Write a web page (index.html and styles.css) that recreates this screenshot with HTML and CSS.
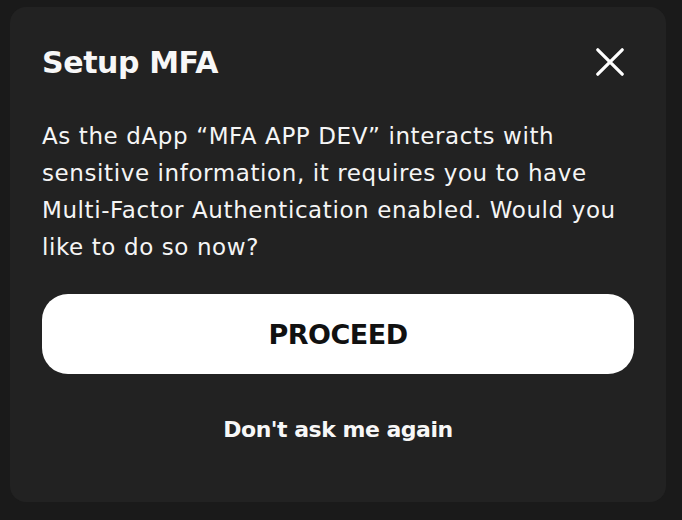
FILE: index.html
```html
<!DOCTYPE html>
<html>
<head>
<meta charset="utf-8">
<link rel="stylesheet" href="styles.css">
</head>
<body>
<div class="modal">
  <div class="header">
    <h1 class="title">Setup MFA</h1>
    <button class="close" aria-label="Close">
      <svg width="28" height="28" viewBox="0 0 28 28"><path d="M1.8 1.8 L26.2 26.2 M26.2 1.8 L1.8 26.2" stroke="#fff" stroke-width="3.2" stroke-linecap="round"/></svg>
    </button>
  </div>
  <p class="text">As the dApp “MFA APP DEV” interacts with<br>sensitive information, it requires you to have<br>Multi-Factor Authentication enabled. Would you<br>like to do so now?</p>
  <button class="proceed">PROCEED</button>
  <button class="skip">Don't ask me again</button>
</div>
</body>
</html>
```
FILE: styles.css
```css
html, body { margin: 0; padding: 0; }
body {
  background: #1a1a1a;
  width: 682px;
  height: 520px;
  font-family: "DejaVu Sans", sans-serif;
  color: #fff;
  overflow: hidden;
}
.modal {
  margin: 7px 0 0 10px;
  width: 656px;
  height: 495px;
  box-sizing: border-box;
  background: #222222;
  border-radius: 16px;
  padding: 33px 32px 0 32px;
  display: flex;
  flex-direction: column;
}
.header {
  display: flex;
  justify-content: space-between;
  align-items: center;
  height: 44px;
}
.title {
  margin: 0;
  font-size: 30px;
  font-weight: 700;
  letter-spacing: -0.4px;
  color: #f7f7f7;
}
.close {
  background: none;
  border: 0;
  padding: 0;
  margin-right: 10px;
  width: 28px;
  height: 28px;
  display: flex;
}
.text {
  margin: 34px 0 0 0;
  font-size: 23px;
  line-height: 37px;
  font-weight: 400;
  letter-spacing: 0.6px;
  white-space: nowrap;
  color: #f5f5f5;
}
.proceed {
  margin-top: 28px;
  height: 80px;
  border: 0;
  border-radius: 26px;
  background: #fff;
  color: #111;
  font-family: inherit;
  font-size: 27px;
  font-weight: 700;
  letter-spacing: -0.5px;
}
.skip {
  margin-top: 43px;
  align-self: center;
  background: none;
  border: 0;
  color: #f7f7f7;
  font-family: inherit;
  font-size: 22px;
  font-weight: 700;
  letter-spacing: -0.5px;
  padding: 0;
}
```
